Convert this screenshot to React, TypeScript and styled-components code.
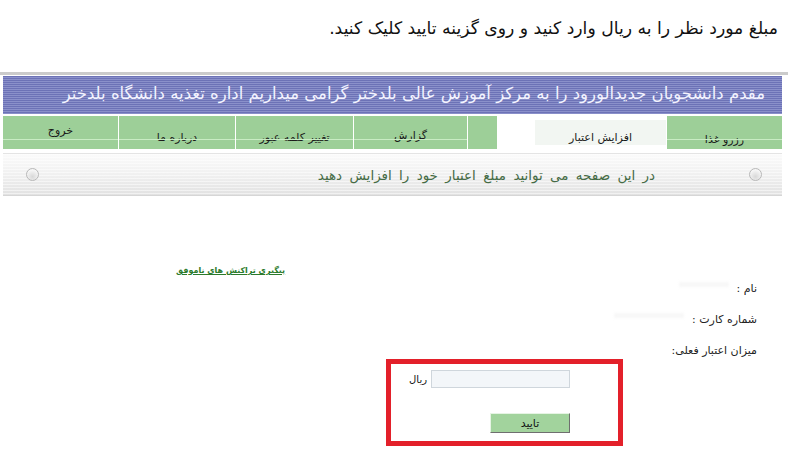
import React from 'react';
import styled, { createGlobalStyle } from 'styled-components';

const GlobalStyle = createGlobalStyle`
  html, body {
    margin: 0;
    padding: 0;
    background: #fff;
  }
  body {
    font-family: "DejaVu Sans", "Noto Sans", sans-serif;
  }
`;

const Page = styled.div`
  direction: rtl;
  width: 788px;
  height: 464px;
  overflow: hidden;
`;

const Instruction = styled.div`
  height: 72px;
  box-sizing: border-box;
  padding: 18px 10px 0 0;
  font-size: 17.2px;
  color: #111;
`;

const TopRule = styled.div`
  height: 3px;
  background: #cbcbcb;
`;

const Frame = styled.div`
  padding: 0 6px 0 3px;
`;

const Banner = styled.div`
  margin-top: 1px;
  height: 38px;
  box-sizing: border-box;
  padding: 8px 17px 0 0;
  background: repeating-linear-gradient(
    to bottom,
    #6c72b6 0px,
    #6c72b6 1px,
    #8a90ca 1px,
    #8a90ca 2px
  );
  color: #f4f4ff;
  font-size: 16.5px;
  white-space: nowrap;
`;

const Nav = styled.div`
  display: flex;
  margin-top: 2px;
  height: 33px;
`;

const NavCell = styled.div<{ $w: number; $pad?: number; $line?: boolean }>`
  position: relative;
  width: ${(p) => p.$w}px;
  flex: none;
  background: #9dcf98;
  border-left: 1px solid #fff;
  box-sizing: border-box;
  font-size: 11px;
  color: #1a1a1a;
  text-align: center;
  padding-top: ${(p) => p.$pad ?? 16}px;

  &::after {
    content: '';
    display: ${(p) => (p.$line === false ? 'none' : 'block')};
    position: absolute;
    left: 0;
    right: 0;
    top: 23px;
    height: 1px;
    background: #c9ecc4;
  }
`;

const NavGap = styled.div<{ $w: number }>`
  width: ${(p) => p.$w}px;
  flex: none;
`;

const ActiveCell = styled.div`
  width: 131px;
  flex: none;
  margin: 4px 0 4px 0;
  background: #f2f6f2;
  font-size: 11px;
  color: #1a1a1a;
  text-align: center;
  padding-top: 11px;
  box-sizing: border-box;
`;

const InfoBar = styled.div`
  margin-top: 4px;
  height: 43px;
  box-sizing: border-box;
  border-top: 1px solid #e4e4e4;
  border-bottom: 1px solid #d6d6d6;
  background:
    repeating-linear-gradient(to bottom, rgba(255,255,255,0.5) 0 1px, rgba(0,0,0,0) 1px 3px),
    linear-gradient(to bottom, #fbfbfb 0%, #efefef 55%, #e2e2e2 100%);
  display: flex;
  align-items: center;
  padding: 0 20px 0 23px;
`;

const Dot = styled.span`
  width: 11px;
  height: 11px;
  border-radius: 50%;
  border: 1px solid #b8b8b8;
  background: radial-gradient(circle at 50% 70%, #d8d8d8, #f6f6f6 70%);
  flex: none;
`;

const InfoText = styled.div`
  flex: 1;
  font-size: 13.5px;
  word-spacing: 3px;
  color: #456b45;
  padding-right: 94px;
`;

const Content = styled.div`
  padding: 66px 31px 0 0;
`;

const LinkRow = styled.div`
  direction: ltr;
  padding-left: 176px;
  height: 11px;
  line-height: 11px;
`;

const FailLink = styled.a`
  font-size: 8px;
  font-weight: bold;
  color: #2b7a2b;
  text-decoration: underline;
  direction: rtl;
`;

const FieldRow = styled.div`
  display: flex;
  align-items: center;
  height: 31px;
  gap: 8px;
`;

const Label = styled.span`
  font-size: 11px;
  color: #222;
`;

const Hidden = styled.span<{ $w: number }>`
  width: ${(p) => p.$w}px;
  height: 5px;
  background: #f7f7f7;
  filter: blur(1.5px);
  margin-top: -8px;
`;

const Annotation = styled.div`
  margin: -7px 134px 0 0;
  width: 237px;
  height: 87px;
  box-sizing: border-box;
  border: 5px solid #e3202a;
  padding: 6px 48px 0 0;
  display: flex;
  flex-direction: column;
  align-items: flex-start;
`;

const AmountRow = styled.div`
  display: flex;
  align-items: center;
  gap: 4px;
`;

const AmountInput = styled.input`
  width: 139px;
  height: 18px;
  box-sizing: border-box;
  background: #f3f6f9;
  border: 1px solid #cfd6dc;
  outline: none;
`;

const Unit = styled.span`
  font-size: 10px;
  color: #111;
`;

const Submit = styled.button`
  margin-top: 25px;
  width: 80px;
  height: 20px;
  background: #a2d39d;
  border: 1px solid;
  border-color: #e6f4e4 #6f6f6f #6f6f6f #e6f4e4;
  font-family: "DejaVu Sans", sans-serif;
  font-size: 11px;
  color: #111;
  padding: 0;
`;

export default function App() {
  return (
    <Page>
      <GlobalStyle />
      <Instruction>مبلغ مورد نظر را به ریال وارد کنید و روی گزینه تایید کلیک کنید.</Instruction>
      <TopRule />
      <Frame>
        <Banner>مقدم دانشجویان جدیدالورود را به مرکز آموزش عالی بلدختر گرامی میداریم اداره تغذیه دانشگاه بلدختر</Banner>
        <Nav>
          <NavCell $w={116} $pad={17}>رزرو غذا</NavCell>
          <ActiveCell>افزایش اعتبار</ActiveCell>
          <NavGap $w={38} />
          <NavCell $w={30} $line={false} />
          <NavCell $w={114} $pad={13}>گزارش</NavCell>
          <NavCell $w={118} $pad={15}>تغییر کلمه عبور</NavCell>
          <NavCell $w={117} $pad={15}>درباره ما</NavCell>
          <NavCell $w={116} $pad={8}>خروج</NavCell>
        </Nav>
        <InfoBar>
          <Dot />
          <InfoText>در این صفحه می توانید مبلغ اعتبار خود را افزایش دهید</InfoText>
          <Dot />
        </InfoBar>
      </Frame>
      <Content>
        <LinkRow>
          <FailLink href="#">پیگیری تراکنش های ناموفق</FailLink>
        </LinkRow>
        <FieldRow>
          <Label>نام :</Label>
          <Hidden $w={50} />
        </FieldRow>
        <FieldRow>
          <Label>شماره کارت :</Label>
          <Hidden $w={70} />
        </FieldRow>
        <FieldRow>
          <Label>میزان اعتبار فعلی:</Label>
        </FieldRow>
        <Annotation>
          <AmountRow>
            <AmountInput type="text" />
            <Unit>ریال</Unit>
          </AmountRow>
          <Submit type="button">تایید</Submit>
        </Annotation>
      </Content>
    </Page>
  );
}
